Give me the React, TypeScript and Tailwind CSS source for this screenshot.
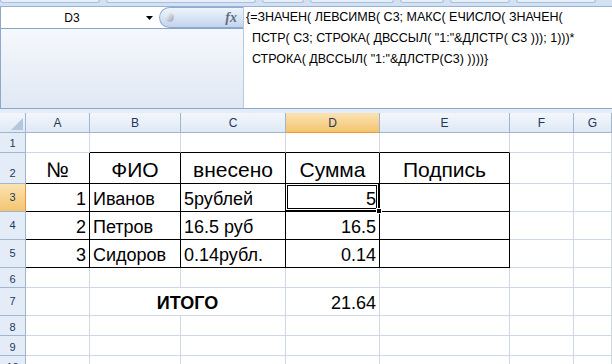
import React from 'react'

type Cell = {
  t?: string
  a?: 'l' | 'r' | 'c'
  big?: boolean
  bold?: boolean
  span?: boolean
  br?: boolean
  bb?: boolean
}

type Row = { n: number; h: string; numPad: string; sel?: boolean; cells: (Cell | null)[] }

const COLS = ['A', 'B', 'C', 'D', 'E', 'F', 'G']

// table block A2:E5 gets black lines
const rows: Row[] = [
  { n: 1, h: 'h-[20px]', numPad: 'pt-[2px]', cells: [{}, { bb: true }, { bb: true }, { bb: true }, { bb: true }, {}, {}] },
  {
    n: 2,
    h: 'h-[31px]',
    numPad: 'pt-[12px]',
    cells: [
      { t: '№', a: 'c', big: true, br: true, bb: true },
      { t: 'ФИО', a: 'c', big: true, br: true, bb: true },
      { t: 'внесено', a: 'c', big: true, br: true, bb: true },
      { t: 'Сумма', a: 'c', big: true, br: true, bb: true },
      { t: 'Подпись', a: 'c', big: true, br: true, bb: true },
      {},
      {},
    ],
  },
  {
    n: 3,
    h: 'h-[28px]',
    numPad: 'pt-[5px]',
    sel: true,
    cells: [
      { t: '1', a: 'r', br: true, bb: true },
      { t: 'Иванов', br: true, bb: true },
      { t: '5рублей', br: true, bb: true },
      { t: '5', a: 'r', br: true, bb: true },
      { br: true, bb: true },
      {},
      {},
    ],
  },
  {
    n: 4,
    h: 'h-[28px]',
    numPad: 'pt-[5px]',
    cells: [
      { t: '2', a: 'r', br: true, bb: true },
      { t: 'Петров', br: true, bb: true },
      { t: '16.5 руб', br: true, bb: true },
      { t: '16.5', a: 'r', br: true, bb: true },
      { br: true, bb: true },
      {},
      {},
    ],
  },
  {
    n: 5,
    h: 'h-[28px]',
    numPad: 'pt-[5px]',
    cells: [
      { t: '3', a: 'r', br: true, bb: true },
      { t: 'Сидоров', br: true, bb: true },
      { t: '0.14рубл.', br: true, bb: true },
      { t: '0.14', a: 'r', br: true, bb: true },
      { br: true, bb: true },
      {},
      {},
    ],
  },
  { n: 6, h: 'h-[20px]', numPad: 'pt-[3px]', cells: [{}, {}, {}, {}, {}, {}, {}] },
  {
    n: 7,
    h: 'h-[28px]',
    numPad: 'pt-[5px]',
    cells: [{}, { t: 'ИТОГО', a: 'c', bold: true, span: true }, null, { t: '21.64', a: 'r' }, {}, {}, {}],
  },
  { n: 8, h: 'h-[20px]', numPad: 'pt-[3px]', cells: [{}, {}, {}, {}, {}, {}, {}] },
  { n: 9, h: 'h-[20px]', numPad: 'pt-[3px]', cells: [{}, {}, {}, {}, {}, {}, {}] },
  { n: 10, h: 'h-[20px]', numPad: 'pt-[3px]', cells: [{}, {}, {}, {}, {}, {}, {}] },
]

function GridCell({ c, h }: { c: Cell; h: string }) {
  const align = c.a === 'r' ? 'justify-end' : c.a === 'c' ? 'justify-center' : 'justify-start'
  return (
    <div
      className={[
        'flex items-end overflow-hidden whitespace-nowrap border-r border-b px-[3px] pb-[3px] leading-none text-black',
        h,
        align,
        c.span ? 'col-span-2' : '',
        c.br ? 'border-r-black' : 'border-r-[#d0d7e5]',
        c.bb ? 'border-b-black' : 'border-b-[#d0d7e5]',
        c.big ? 'text-[21px]' : 'text-[18px]',
        c.bold ? 'font-bold text-[17px]' : '',
      ].join(' ')}
    >
      {c.t}
    </div>
  )
}

function FormulaBar() {
  return (
    <div className="flex h-[102px] border-b border-[#8ea8c9] bg-white">
      <div className="flex w-[243px] flex-col border-l border-[#8ea8c9] bg-gradient-to-b from-[#fbfcfe] to-[#e0e8f4]">
        <div className="flex h-[22px] border-b border-[#87a3c8] bg-white">
          <div className="relative flex w-[158px] items-center justify-center text-[12px] text-black">
            <span className="ml-[-16px]">D3</span>
            <svg className="absolute right-[6px] top-[9px]" width="7" height="4" viewBox="0 0 7 4">
              <path d="M0 0h7L3.5 4z" fill="#000" />
            </svg>
          </div>
          <div className="flex flex-1 items-center justify-between rounded-l-[11px] border border-r-0 border-[#8fabd2] bg-gradient-to-b from-[#eef4fc] via-[#d9e5f5] to-[#c2d4ec] pl-[5px] pr-[6px]">
            <div className="h-[9px] w-[9px] rounded-full bg-gradient-to-br from-[#ffffff] to-[#9aa4b2]" />
            <span className="font-['Liberation_Serif',serif] text-[14px] font-bold italic text-[#5f6f86]">fx</span>
          </div>
        </div>
      </div>
      <div className="flex-1 border-l border-[#b9c9de] pl-[2px] font-['Liberation_Sans',sans-serif] text-[12.5px] leading-[21px] text-black">
        <div className="whitespace-pre">{'{=ЗНАЧЕН( ЛЕВСИМВ( C3; МАКС( ЕЧИСЛО( ЗНАЧЕН('}</div>
        <div className="whitespace-pre pl-[6px]">{'ПСТР( C3; СТРОКА( ДВССЫЛ( "1:"&ДЛСТР( C3 ))); 1)))*'}</div>
        <div className="whitespace-pre pl-[6px]">{'СТРОКА( ДВССЫЛ( "1:"&ДЛСТР(C3) ))))}'}</div>
      </div>
    </div>
  )
}

export default function App() {
  return (
    <div className="h-[364px] w-[612px] overflow-hidden bg-white font-['Liberation_Sans',sans-serif]">
      {/* ribbon edge */}
      <div className="flex h-[7px] gap-[6px] border-b border-[#98b1d4] bg-[#d3e1f2]">
        <div className="h-[3px] w-[100px] rounded-b-[3px] border border-t-0 border-[#a9c0de] bg-[#e6eef9]" />
        <div className="h-[3px] w-[150px] rounded-b-[3px] border border-t-0 border-[#a9c0de] bg-[#e6eef9]" />
        <div className="h-[3px] w-[42px] rounded-b-[3px] border border-t-0 border-[#a9c0de] bg-[#e6eef9]" />
        <div className="h-[3px] w-[84px] rounded-b-[3px] border border-t-0 border-[#a9c0de] bg-[#e6eef9]" />
        <div className="h-[3px] w-[44px] rounded-b-[3px] border border-t-0 border-[#a9c0de] bg-[#e6eef9]" />
        <div className="h-[3px] w-[60px] rounded-b-[3px] border border-t-0 border-[#a9c0de] bg-[#e6eef9]" />
        <div className="h-[3px] w-[80px] rounded-b-[3px] border border-t-0 border-[#a9c0de] bg-[#e6eef9]" />
      </div>

      <FormulaBar />
      <div className="h-[4px] bg-[#e4ecf7]" />

      <div className="relative grid grid-cols-[26px_64px_91px_105px_94px_130px_64px_1fr]">
        {/* corner */}
        <div className="relative h-[20px] border-r border-b border-[#9eb6ce] bg-gradient-to-b from-[#f3f7fc] to-[#dfe8f4]">
          <svg className="absolute bottom-[2px] right-[2px]" width="12" height="12" viewBox="0 0 12 12">
            <path d="M12 0v12H0z" fill="#b4c7df" />
          </svg>
        </div>
        {COLS.map(l =>
          l === 'D' ? (
            <div
              key={l}
              className="flex h-[20px] items-center justify-center border-r border-b border-r-[#9eb6ce] border-b-[#f29536] bg-gradient-to-b from-[#fbe3b2] to-[#f3c56e] text-[12px] text-[#1e395b]"
            >
              {l}
            </div>
          ) : (
            <div
              key={l}
              className="flex h-[20px] items-center justify-center border-r border-b border-[#9eb6ce] bg-gradient-to-b from-[#f3f7fc] to-[#dfe8f4] text-[12px] text-[#1e395b]"
            >
              {l}
            </div>
          )
        )}

        {rows.map(r => (
          <React.Fragment key={r.n}>
            {r.sel ? (
              <div
                className={`flex justify-center border-r border-b border-r-[#f29536] border-b-[#9eb6ce] bg-gradient-to-b from-[#fbe3b2] to-[#f3c56e] text-[11px] text-[#1e395b] ${r.h} ${r.numPad}`}
              >
                {r.n}
              </div>
            ) : (
              <div
                className={`flex justify-center border-r border-b border-[#9eb6ce] bg-[#e4ecf7] text-[11px] text-[#1e395b] ${r.h} ${r.numPad}`}
              >
                {r.n}
              </div>
            )}
            {r.cells.map((c, i) => (c ? <GridCell key={i} c={c} h={r.h} /> : null))}
          </React.Fragment>
        ))}

        {/* active cell D3 */}
        <div className="absolute left-[285px] top-[70px] h-[28px] w-[94px] border border-black shadow-[inset_0_0_0_1px_#fff,inset_0_0_0_2px_#000]" />
        <div className="absolute left-[376px] top-[95px] h-[6px] w-[6px] border border-white bg-black" />
      </div>
    </div>
  )
}
